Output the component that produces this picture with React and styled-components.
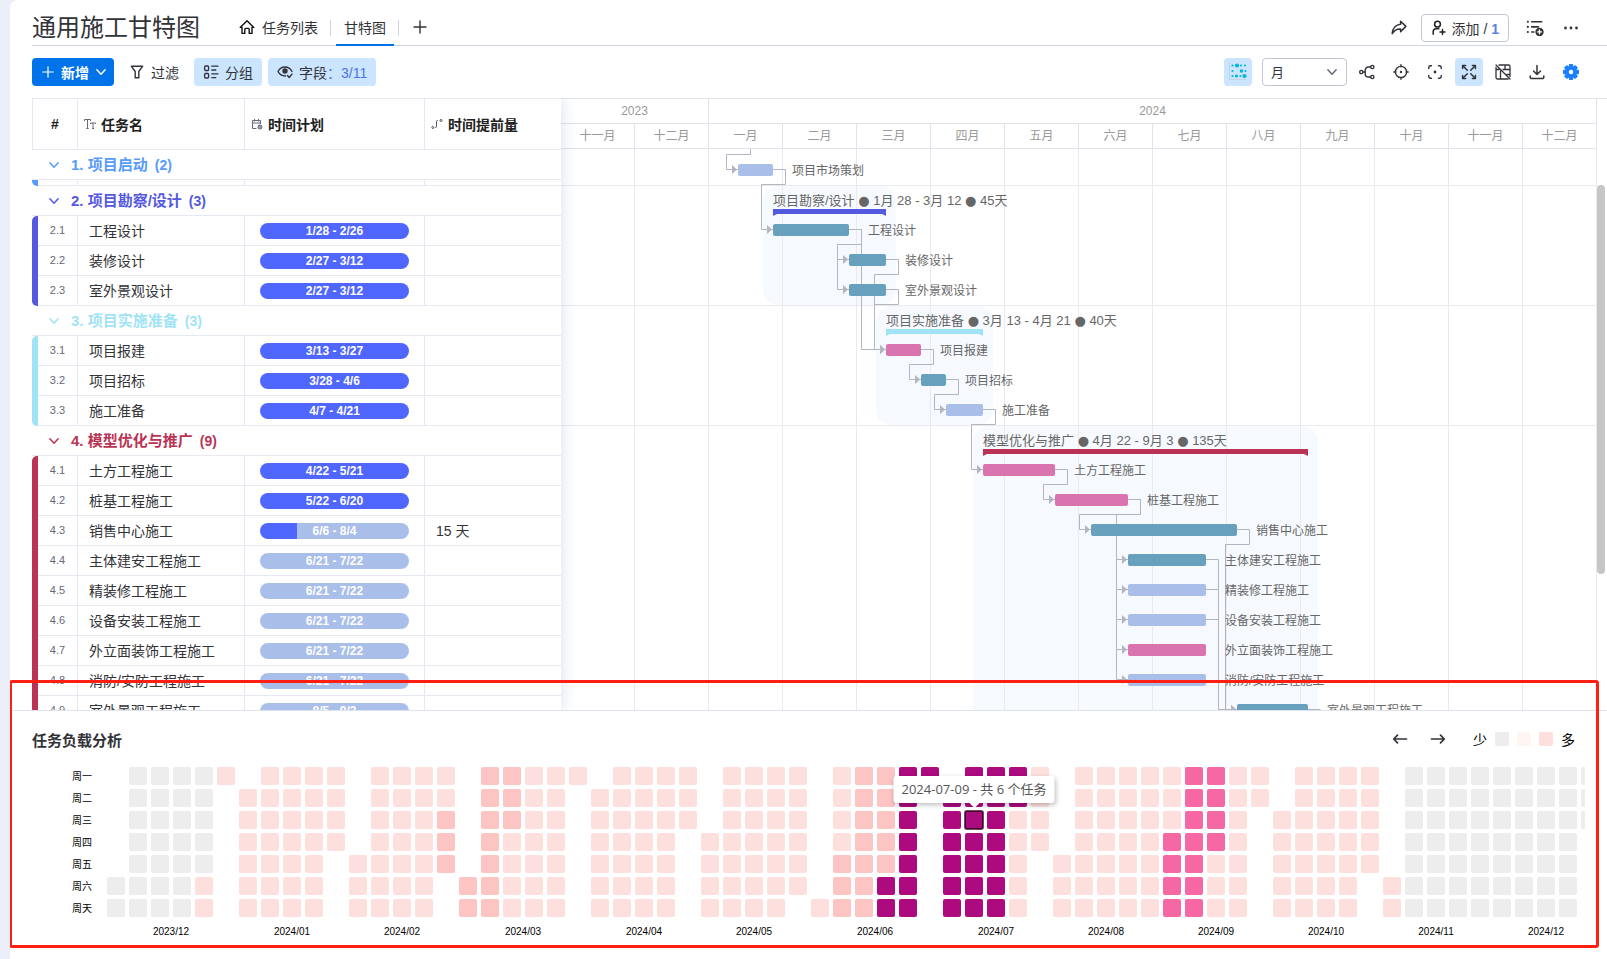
import React, { useState } from 'react';
import styled, { createGlobalStyle, css } from 'styled-components';

const GlobalStyle = createGlobalStyle`
  * {
    box-sizing: border-box;
  }
  body {
    margin: 0;
    background: #eceff8;
    color: #323338;
    font-family: "Liberation Sans", "Noto Sans CJK SC", sans-serif;
    font-size: 14px;
  }
  button, select {
    font: inherit;
    color: inherit;
  }
  button {
    background: none;
    border: 0;
    padding: 0;
    cursor: pointer;
  }
  h1, h2 {
    margin: 0;
  }
  svg {
    display: block;
  }
`;

/* ---------- data ---------- */

const MONTH_W = 74;
const ROW_H = 30;
const FIRST_ROW_Y = 7;

const months = ['十一月', '十二月', '一月', '二月', '三月', '四月', '五月', '六月', '七月', '八月', '九月', '十月', '十一月', '十二月'];

const TEAL = '#68a1bd';
const PINK = '#d974b0';
const BLUE = '#a9bee8';

const groups = [
  {
    no: 1, name: '项目启动', count: 2, color: '#579bfc', scrolled: true,
    tasks: [
      { id: '1.1', name: '项目立项', start: [1, 1], end: [1, 12], color: BLUE, next: ['1.2'] },
      { id: '1.2', name: '项目市场策划', start: [1, 13], end: [1, 27], color: BLUE, next: ['2.1'] },
    ],
  },
  {
    no: 2, name: '项目勘察/设计', count: 3, color: '#5559df', days: 45,
    tasks: [
      { id: '2.1', name: '工程设计', start: [1, 28], end: [2, 26], color: TEAL, done: 100, next: ['2.2', '2.3', '3.1'] },
      { id: '2.2', name: '装修设计', start: [2, 27], end: [3, 12], color: TEAL, done: 100, next: ['3.1'] },
      { id: '2.3', name: '室外景观设计', start: [2, 27], end: [3, 12], color: TEAL, done: 100, next: ['3.1'] },
    ],
  },
  {
    no: 3, name: '项目实施准备', count: 3, color: '#a1e3f6', days: 40,
    tasks: [
      { id: '3.1', name: '项目报建', start: [3, 13], end: [3, 27], color: PINK, done: 100, next: ['3.2'] },
      { id: '3.2', name: '项目招标', start: [3, 28], end: [4, 6], color: TEAL, done: 100, next: ['3.3'] },
      { id: '3.3', name: '施工准备', start: [4, 7], end: [4, 21], color: BLUE, done: 100, next: ['4.1'] },
    ],
  },
  {
    no: 4, name: '模型优化与推广', count: 9, color: '#bb3354', days: 135,
    tasks: [
      { id: '4.1', name: '土方工程施工', start: [4, 22], end: [5, 21], color: PINK, done: 100, next: ['4.2'] },
      { id: '4.2', name: '桩基工程施工', start: [5, 22], end: [6, 20], color: PINK, done: 100, next: ['4.3', '4.4', '4.5', '4.6', '4.7', '4.8'] },
      { id: '4.3', name: '销售中心施工', start: [6, 6], end: [8, 4], color: TEAL, done: 25, lead: '15 天', next: ['4.9'] },
      { id: '4.4', name: '主体建安工程施工', start: [6, 21], end: [7, 22], color: TEAL, done: 0, next: ['4.9'] },
      { id: '4.5', name: '精装修工程施工', start: [6, 21], end: [7, 22], color: BLUE, done: 0, next: ['4.9'] },
      { id: '4.6', name: '设备安装工程施工', start: [6, 21], end: [7, 22], color: BLUE, done: 0, next: ['4.9'] },
      { id: '4.7', name: '外立面装饰工程施工', start: [6, 21], end: [7, 22], color: PINK, done: 0, next: [] },
      { id: '4.8', name: '消防/安防工程施工', start: [6, 21], end: [7, 22], color: BLUE, done: 0, next: [] },
      { id: '4.9', name: '室外景观工程施工', start: [8, 5], end: [9, 3], color: TEAL, done: 0, next: ['5.1'] },
    ],
  },
];

const daysIn = (month, year = 2024) => new Date(year, month, 0).getDate();
const dateX = (month, day) => Math.round((month + 1) * MONTH_W + (MONTH_W * (day - 1)) / daysIn(month));

// every task gets its box on the chart, every group its frame
const bars = {};
const frames = [];
let y = FIRST_ROW_Y - ROW_H;
groups.forEach(group => {
  const top = y;
  if (!group.scrolled) y += ROW_H;
  group.tasks.forEach(task => {
    const x = dateX(...task.start);
    bars[task.id] = { ...task, x, y: y + 8, x2: dateX(task.end[0], task.end[1] + 1) };
    y += ROW_H;
  });
  const own = group.tasks.map(t => bars[t.id]);
  frames.push({ ...group, top, bottom: y, x: Math.min(...own.map(b => b.x)), x2: Math.max(...own.map(b => b.x2)) });
});

const linkPath = (from, to) => {
  const y1 = from.y + 5.5;
  const out = from.x2 + 12.5;
  if (!to) return `M${from.x2} ${y1}H${out}`;
  const y2 = to.y + 5.5;
  const into = to.x - 11.5;
  // a link with room enough goes straight down beside the target
  if (out < to.x) return `M${from.x2} ${y1}H${out}V${y2}H${to.x}`;
  return `M${from.x2} ${y1}H${out}V${y1 + 15}H${into}V${y2}H${to.x}`;
};

const links = [];
Object.values(bars).forEach(bar => {
  bar.next.forEach(id => links.push({ key: bar.id + id, from: bar, to: bars[id] }));
});

/* ---------- workload calendar ---------- */

const levelOf = date => {
  const n = (date.getFullYear() - 2023) * 10000 + (date.getMonth() + 1) * 100 + date.getDate();
  const between = (a, b) => n >= a && n <= b;
  if (between(10621, 10722)) return 6;
  if (between(10904, 10918)) return 4;
  if (between(10227, 10312) || between(10606, 10620)) return 2;
  if (between(1229, 11102)) return 1;
  return 0;
};

const levelColor = { 0: '#ededed', 1: '#fde0dd', 2: '#fcc5c3', 4: '#f568a3', 6: '#ad0a7f' };

const calendar = Array.from({ length: 13 }, (_, i) => {
  const year = i === 0 ? 2023 : 2024;
  const month = i === 0 ? 12 : i;
  return {
    label: `${year}/${String(month).padStart(2, '0')}`,
    offset: new Date(year, month - 1, 1).getDay(),
    days: Array.from({ length: daysIn(month, year) }, (_, d) => ({
      key: `${year}-${String(month).padStart(2, '0')}-${String(d + 1).padStart(2, '0')}`,
      level: levelOf(new Date(year, month - 1, d + 1)),
    })),
  };
});

const weekdays = ['周一', '周二', '周三', '周四', '周五', '周六', '周天'];

/* ---------- icons ---------- */

const Icon = ({ size = 16, children, ...rest }) => (
  <svg width={size} height={size} viewBox="0 0 16 16" fill="none" stroke="currentColor" strokeWidth="1.4" strokeLinecap="round" strokeLinejoin="round" aria-hidden="true" {...rest}>
    {children}
  </svg>
);

const HomeIcon = () => <Icon stroke="#111"><path d="M1.2 8.4 8 1.8l6.8 6.6H13v6h-2.8v-4a1 1 0 0 0-1-1H6.8a1 1 0 0 0-1 1v4H3v-6z" /></Icon>;
const PlusIcon = ({ size }) => <Icon size={size}><path d="M8 2v12M2 8h12" /></Icon>;
const Chevron = ({ size = 12 }) => <Icon size={size} strokeWidth="2"><path d="m2.5 5 5.5 6 5.5-6" /></Icon>;
const ShareIcon = () => <Icon strokeWidth="1.5"><path d="m9.6 1.2 5.300 5.200-5.300 5.200V8.900C6 8.700 3.200 10.400 1.200 13.600 1.600 8.200 4.800 4.500 9.600 4.200z" /></Icon>;
const PersonIcon = () => (
  <Icon stroke="#222" strokeWidth="1.500"><circle cx="6.500" cy="4.200" r="2.900" /><path d="M2.200 14.200v-2.500a3 3 0 0 1 3-3h2.600M11.500 9.500v5M9 12h5" /></Icon>
);
const ListPlusIcon = () => (
  <Icon size={18}>
    <path d="M5 2.500h9M5 7h6M5 11.500h2" /><path d="M1.600 2.500h.1M1.600 7h.1M1.600 11.500h.1" strokeWidth="1.800" />
    <circle cx="12" cy="11.500" r="3" fill="currentColor" /><path d="M12 9.800v3.400M10.300 11.500h3.400" stroke="#fff" strokeWidth="1.200" />
  </Icon>
);
const DotsIcon = () => <Icon fill="currentColor" stroke="none"><circle cx="2.500" cy="8" r="1.400" /><circle cx="8" cy="8" r="1.400" /><circle cx="13.500" cy="8" r="1.400" /></Icon>;
const FilterIcon = () => <Icon><path d="M2.300 2.200h11.400L9.800 7.500v6.200H6.200V7.500z" /></Icon>;
const GroupIcon = () => (
  <Icon strokeWidth="1.3"><rect x="1.600" y="2" width="4" height="4.500" rx="1" /><rect x="1.600" y="9.500" width="4" height="4.500" rx="1" /><path d="M8.800 2.200H15M8.800 6h4M8.800 9.800H15M8.800 13.600h4" /></Icon>
);
const EyeIcon = () => (
  <Icon><path d="M8.500 12C4.800 12 2.200 9.800 1 7.500 2.300 5 4.900 3 8 3s5.700 2 7 4.500" /><circle cx="8" cy="7" r="2" fill="currentColor" /><path d="m10.400 11.600 1.800 1.900 2.800-3.400" /></Icon>
);
const TimelineIcon = () => (
  <svg width="20" height="20" viewBox="0 0 20 20" fill="#00b8d9" aria-hidden="true">
    <path d="M1.500 1v16.500H18" fill="none" stroke="#c3d4e2" />
    {[[4.500, 3.500, 1.100], [9, 3.500, 2.100], [13, 3.500, 1.100], [17, 3.500, 1.100], [4.500, 9, 1.100], [13.500, 9, 1.800], [17.500, 9, 1.100], [4.500, 14, 1.100], [8.500, 14, 1.600], [12.500, 14, 1.100], [16.500, 14, 2.100]].map(([cx, cy, r]) => (
      <circle key={`${cx}-${cy}`} cx={cx} cy={cy} r={r} />
    ))}
  </svg>
);
const BranchIcon = () => (
  <Icon><circle cx="2.300" cy="8" r="1.600" /><circle cx="13.300" cy="3" r="1.600" /><circle cx="13.300" cy="13" r="1.600" /><path d="M4 8h2.200M11.500 3h-2A3.300 3.300 0 0 0 6.200 6.300v3.400A3.300 3.300 0 0 0 9.500 13h2" /></Icon>
);
const TargetIcon = () => (
  <Icon><circle cx="8" cy="8" r="5.600" /><path d="M8 .8v2M8 13.200v2M.8 8h2M13.200 8h2" /><circle cx="8" cy="8" r=".5" fill="currentColor" /></Icon>
);
const FocusIcon = () => (
  <Icon><path d="M1.800 4.500V3.300a1.500 1.500 0 0 1 1.500-1.500H4.500M11.500 1.800h1.200a1.500 1.500 0 0 1 1.500 1.500V4.500M14.200 11.500v1.200a1.500 1.500 0 0 1-1.500 1.500H11.500M4.500 14.200H3.300a1.500 1.500 0 0 1-1.500-1.500V11.500" /><circle cx="8" cy="8" r=".7" fill="currentColor" /></Icon>
);
const ExpandIcon = () => (
  <Icon strokeWidth="1.5"><path d="m2 2 4.300 4.300M14 2 9.700 6.300M2 14l4.300-4.300M14 14 9.700 9.700" /><path d="M1.600 4.600v-3h3M11.400 1.600h3v3M1.600 11.400v3h3M14.400 11.400v3h-3" /></Icon>
);
const TableOffIcon = () => (
  <Icon strokeWidth="1.3"><path d="M4 1h9.500a1.500 1.500 0 0 1 1.500 1.500v10M13 15H2.500A1.500 1.500 0 0 1 1 13.500V3.500M8 5.500h7M1 5.500h3M5.500 7v8M10 1v4.500M12 10.500h3M1 1l14 14" /></Icon>
);
const DownloadIcon = () => <Icon strokeWidth="1.5"><path d="M8 1.500v8.800M4.500 7 8 10.500 11.500 7M1.200 12v1.200a1.300 1.300 0 0 0 1.300 1.300h11a1.300 1.300 0 0 0 1.300-1.300V12" /></Icon>;
const GearIcon = () => (
  <Icon stroke="none" fill="#1a80ff">
    {[0, 45, 90, 135].map(a => <rect key={a} x="5.800" y="0" width="4.400" height="16" rx="1" transform={`rotate(${a} 8 8)`} />)}
    <circle cx="8" cy="8" r="6" /><circle cx="8" cy="8" r="2.200" fill="#fff" />
  </Icon>
);
const TextIcon = () => (
  <svg width="12" height="12" viewBox="0 0 12 12" fill="none" stroke="#676879" aria-hidden="true"><path d="M.5 3V1.500h6V3M3.500 1.500v9M2.300 10.500h2.400M6.500 6V5h5v1M9 5v5.500M8 10.500h2" /></svg>
);
const CalendarIcon = () => (
  <svg width="12" height="12" viewBox="0 0 12 12" fill="none" stroke="#676879" aria-hidden="true"><path d="M5.500 10.500h-4v-8h8V6M1.500 5h8M3.500 1v2.500M7.500 1v2.500" /><circle cx="9" cy="9" r="2" fill="#9a9ba7" /></svg>
);
const LeadIcon = () => (
  <svg width="12" height="12" viewBox="0 0 12 12" fill="none" stroke="#50515c" aria-hidden="true"><circle cx="1.800" cy="9.500" r="1" /><circle cx="10" cy="2.500" r="1" /><path d="M4 9.500h.5a1 1 0 0 0 1-1V3.500a1 1 0 0 1 1-1H7" /></svg>
);
const ArrowIcon = ({ back }) => <Icon strokeWidth="1.700"><path d={back ? 'M14.500 8H1.800M5.500 4.200 1.700 8l3.800 3.800' : 'M1.500 8h12.700M10.500 4.200 14.300 8l-3.800 3.800'} /></Icon>;

/* ---------- layout ---------- */

const Page = styled.main`
  height: 100vh;
  min-height: 640px;
  margin-left: 10px;
  background: #fff;
  border-top-left-radius: 8px;
  display: flex;
  flex-direction: column;
  overflow: hidden;
`;

const Header = styled.header`
  height: 46px;
  flex: none;
  margin-left: 22px;
  padding-right: 22px;
  border-bottom: 1px solid #d0d4e4;
  display: flex;
  justify-content: space-between;
`;

const Title = styled.h1`
  font-size: 24px;
  font-weight: 400;
  line-height: 36px;
  padding-top: 10px;
  margin-right: 31px;
`;

const Row = styled.div`
  display: flex;
  align-items: center;
  gap: ${p => p.$gap || 0}px;
`;

const Tabs = styled.nav`
  display: flex;
  align-items: flex-end;
  height: 46px;
`;

const Tab = styled.button`
  height: 36px;
  display: flex;
  align-items: center;
  gap: 7px;
  padding: 0 8px;
  border-bottom: 2px solid ${p => (p.$active ? '#0073ea' : 'transparent')};
`;

const TabDivider = styled.span`
  width: 1px;
  height: 16px;
  margin: 0 5px 10px 4px;
  background: #d0d4e4;
`;

const HeaderActions = styled.div`
  display: flex;
  align-items: center;
  gap: 8px;
  padding-top: 10px;
`;

const IconButton = styled.button`
  width: 28px;
  height: 28px;
  display: flex;
  align-items: center;
  justify-content: center;
  border-radius: 4px;
  background: ${p => (p.$active ? '#cce5ff' : 'none')};
`;

const Members = styled.button`
  height: 28px;
  display: flex;
  align-items: center;
  gap: 5px;
  padding: 0 9px;
  margin-right: 4px;
  border: 1px solid #c3c6d4;
  border-radius: 4px;
  b {
    color: #5d7de8;
  }
`;

const Toolbar = styled.div`
  height: 52px;
  flex: none;
  padding: 0 22px;
  display: flex;
  align-items: center;
  justify-content: space-between;
`;

const ToolButton = styled.button`
  height: 28px;
  display: flex;
  align-items: center;
  gap: 6px;
  padding: 0 9px;
  border-radius: 4px;
  white-space: nowrap;
  ${p => p.$active && css`
    background: #cce5ff;
  `}
  ${p => p.$primary && css`
    background: #0073ea;
    color: #fff;
    font-weight: 700;
    padding: 0 7px 0 9px;
  `}
  em {
    font-style: normal;
    color: #4f73e6;
  }
`;

const SelectBox = styled.label`
  position: relative;
  width: 85px;
  margin-left: 4px;
  select {
    appearance: none;
    width: 100%;
    height: 28px;
    display: block;
    padding: 0 8px;
    border: 1px solid #c3c6d4;
    border-radius: 4px;
    background: #fff;
    font-size: 13px;
  }
  svg {
    position: absolute;
    right: 9px;
    top: 8px;
    color: #676879;
    pointer-events: none;
  }
`;

const Work = styled.section`
  flex: 1;
  min-height: 0;
  margin-left: 22px;
  display: flex;
  overflow: hidden;
`;

const TablePane = styled.div`
  flex: none;
  width: 529px;
  position: relative;
  z-index: 1;
  background: #fff;
  box-shadow: 3px 0 12px rgba(70, 90, 180, 0.14);
`;

const TaskTable = styled.table`
  width: 100%;
  table-layout: fixed;
  border-collapse: separate;
  border-spacing: 0;
  th, td {
    padding: 0;
    text-align: left;
    white-space: nowrap;
  }
`;

const HeadCell = styled.th`
  height: 52px;
  border: solid #e6e9ef;
  border-width: 1px 0 1px ${p => (p.$first ? 1 : 0)}px;
  ${p => !p.$last && css`
    border-right-width: 1px;
  `}
  span {
    display: flex;
    align-items: center;
    justify-content: ${p => (p.$first ? 'center' : 'flex-start')};
    gap: 5px;
    padding-left: ${p => (p.$first ? 0 : 6)}px;
    color: #222;
  }
`;

const GroupCell = styled.td`
  height: 30px;
  border-bottom: 1px solid #e6e9ef;
  color: ${p => p.$color};
  button {
    display: flex;
    align-items: center;
    gap: 11px;
    height: 29px;
    padding-left: 16px;
    font-size: 15px;
    font-weight: 700;
    line-height: 24px;
  }
  small {
    font-size: 14px;
    margin-left: 7px;
  }
`;

const Cell = styled.td`
  height: ${p => (p.$short ? 6 : 30)}px;
  border-right: ${p => (p.$last ? 0 : 1)}px solid #e6e9ef;
  border-bottom: 1px solid #e6e9ef;
  font-size: 14px;
  line-height: ${p => (p.$short ? 5 : 24)}px;
  && {
    padding: 0 ${p => p.$pad || 11}px;
  }
`;

const NumberCell = styled.td`
  height: ${p => (p.$short ? 6 : 30)}px;
  div {
    display: flex;
    height: ${p => (p.$short ? 6 : 30)}px;
  }
  i {
    width: 6px;
    background: ${p => p.$color};
    border-radius: ${p => (p.$start ? 5 : 0)}px 0 0 ${p => (p.$end ? 5 : 0)}px;
  }
  span {
    flex: 1;
    border-right: 1px solid #e6e9ef;
    border-bottom: 1px solid #e6e9ef;
    font-size: 11px;
    line-height: 29px;
    text-align: center;
    color: #676879;
  }
`;

const Pill = styled.div`
  height: 16px;
  border-radius: 8px;
  background: linear-gradient(to right, #4f66ff ${p => p.$done}%, #a9bee8 ${p => p.$done}%);
  color: #fff;
  font-size: 12px;
  font-weight: 700;
  line-height: 16px;
  text-align: center;
`;

const GanttPane = styled.div`
  flex: 1;
  min-width: 0;
  border-top: 1px solid #dfe3ec;
  display: flex;
  overflow: hidden;
`;

const Timeline = styled.div`
  flex: none;
  width: ${MONTH_W * 14}px;
`;

const Years = styled.div`
  display: flex;
`;

const Scale = styled.div`
  width: ${p => p.$months * MONTH_W}px;
  height: 25px;
  border-right: 1px solid #dfe3ec;
  border-bottom: 1px solid #dfe3ec;
  font-size: 12px;
  line-height: 24px;
  text-align: center;
  color: #999;
`;

const ScrollTrack = styled.div`
  width: 8px;
  height: 389px;
  margin-top: 86px;
  border-radius: 4px;
  background: #c6c6c6;
`;

const ChartLabel = styled.text`
  font-size: ${p => (p.$big ? 13 : 12)}px;
  fill: #666;
`;

const Dot = styled.tspan`
  font-family: "DejaVu Sans", sans-serif;
`;

const LoadPanel = styled.section`
  flex: none;
  position: relative;
  height: 249px;
  padding: 14px 22px 0;
  border-top: 1px solid #dfe3ec;
  background: #fff;
`;

const LoadHeader = styled.div`
  display: flex;
  justify-content: space-between;
  align-items: center;
  height: 28px;
  margin-bottom: 14px;
  h2 {
    font-size: 15px;
    font-weight: 700;
  }
`;

const Legend = styled.div`
  display: flex;
  align-items: center;
  gap: 8px;
  padding: 0 10px 0 11px;
  color: #000;
`;

const Swatch = styled.i`
  width: 14px;
  height: 14px;
  border-radius: 2px;
  background: ${p => p.$color};
`;

const Heatmap = styled.div`
  display: flex;
  gap: 15px;
  color: #000;
  font-size: 10px;
`;

const Weekdays = styled.div`
  width: 60px;
  flex: none;
  display: grid;
  grid-auto-rows: 18px;
  row-gap: 4px;
  line-height: 20px;
  text-align: right;
`;

const Months = styled.div`
  flex: 1;
  min-width: 0;
  display: flex;
  gap: 4px;
  overflow: hidden;
`;

const Month = styled.div`
  flex: none;
  text-align: center;
  p {
    margin: 6px 0 0;
    line-height: 18px;
  }
`;

const Days = styled.div`
  display: grid;
  grid-template-rows: repeat(7, 18px);
  grid-auto-columns: 18px;
  grid-auto-flow: column;
  gap: 4px;
`;

const Day = styled.div`
  position: relative;
  grid-row-start: ${p => p.$row || 'auto'};
  border-radius: 2px;
  background: ${p => levelColor[p.$level]};
  ${p => p.$active && css`
    box-shadow: 0 0 0 1px #6b4a62, inset 0 0 0 1px #3a0a2e;
  `}
`;

const Tooltip = styled.div`
  position: absolute;
  z-index: 2;
  bottom: 26px;
  left: 50%;
  transform: translateX(-50%);
  height: 27px;
  padding: 0 8px;
  border-radius: 3px;
  background: #fff;
  box-shadow: 1px 2px 5px rgba(0, 0, 0, 0.25);
  color: #555;
  font-family: "Open Sans", "Noto Sans CJK SC", sans-serif;
  font-size: 13px;
  line-height: 27px;
  white-space: nowrap;
  &::after {
    content: "";
    position: absolute;
    top: 100%;
    left: 50%;
    margin-left: -5px;
    border: 5px solid transparent;
    border-top-color: #fff;
    border-bottom: 0;
  }
`;

const Highlight = styled.div`
  position: absolute;
  top: -31px;
  right: 8px;
  bottom: 11px;
  left: -1px;
  z-index: 3;
  border: 3px solid #ff1e12;
  border-radius: 3px;
  pointer-events: none;
`;

/* ---------- parts ---------- */

const TaskRow = ({ task, group, first, last }) => {
  const short = group.scrolled;
  return (
    <tr>
      <NumberCell $color={group.color} $start={first && !short} $end={last} $short={short}>
        <div><i /><span>{!short && task.id}</span></div>
      </NumberCell>
      <Cell $short={short}>{!short && task.name}</Cell>
      <Cell $short={short} $pad={15}>
        {!short && <Pill $done={task.done}>{task.start.join('/')} - {task.end.join('/')}</Pill>}
      </Cell>
      <Cell $short={short} $last>{task.lead}</Cell>
    </tr>
  );
};

const Chart = () => (
  <svg width={MONTH_W * 14} height="1000" aria-label="甘特图">
    <g fill="#f6faff">
      {frames.slice(1).map(f => (
        <rect key={f.no} x={f.x - 10} y={f.top} width={f.x2 - f.x + 20} height={f.bottom - f.top - 1} rx="16" />
      ))}
    </g>
    <g fill="#e8eaee">
      {months.map((m, i) => <rect key={i} x={(i + 1) * MONTH_W - 1} y="0" width="1" height="1000" />)}
      {frames.map(f => <rect key={f.no} x="0" y={f.bottom - 1} width={MONTH_W * 14} height="1" />)}
    </g>
    <g fill="none" stroke="#b3b6c1">
      {links.map(l => <path key={l.key} d={linkPath(l.from, l.to)} />)}
    </g>
    <g fill="#b3b6c1">
      {links.filter(l => l.to).map(l => (
        <path key={l.key} d={`M${l.to.x - 6} ${l.to.y + 1}l5 4.500-5 4.500z`} />
      ))}
    </g>
    {Object.values(bars).map(b => (
      <g key={b.id}>
        <rect x={b.x} y={b.y} width={b.x2 - b.x} height="12" rx="2" fill={b.color} />
        <ChartLabel x={b.x2 + 19} y={b.y + 11}>{b.name}</ChartLabel>
      </g>
    ))}
    {frames.slice(1).map(f => {
      const from = f.tasks[0].start;
      const to = f.tasks[f.tasks.length - 1].end;
      return (
        <g key={f.no}>
          <path fill={f.color} d={`M${f.x} ${f.top + 23}H${f.x2}v7l-4-2H${f.x + 4}l-4 2z`} />
          <ChartLabel $big x={f.x} y={f.top + 19}>
            {f.name} <Dot>●</Dot> {`${from[0]}月 ${from[1]} - ${to[0]}月 ${to[1]}`} <Dot>●</Dot> {f.days}天
          </ChartLabel>
        </g>
      );
    })}
  </svg>
);

const App = () => {
  const [scale, setScale] = useState('月');
  const [activeDay, setActiveDay] = useState('2024-07-09');

  return (
    <Page>
      <GlobalStyle />
      <Header>
        <Row>
          <Title>通用施工甘特图</Title>
          <Tabs>
            <Tab><HomeIcon />任务列表</Tab>
            <TabDivider />
            <Tab $active>甘特图</Tab>
            <TabDivider />
            <Tab aria-label="添加视图"><PlusIcon size={16} /></Tab>
          </Tabs>
        </Row>
        <HeaderActions>
          <IconButton aria-label="分享"><ShareIcon /></IconButton>
          <Members><PersonIcon /><span>添加 / <b>1</b></span></Members>
          <IconButton aria-label="日志"><ListPlusIcon /></IconButton>
          <IconButton aria-label="更多"><DotsIcon /></IconButton>
        </HeaderActions>
      </Header>

      <Toolbar>
        <Row $gap={6}>
          <ToolButton $primary><PlusIcon size={14} />新增<Chevron /></ToolButton>
          <ToolButton><FilterIcon />过滤</ToolButton>
          <ToolButton $active><GroupIcon />分组</ToolButton>
          <ToolButton $active><EyeIcon /><span>字段<em>：3/11</em></span></ToolButton>
        </Row>
        <Row $gap={6}>
          <IconButton $active aria-label="时间轴"><TimelineIcon /></IconButton>
          <SelectBox>
            <select aria-label="时间刻度" value={scale} onChange={e => setScale(e.target.value)}>
              <option>月</option>
              <option>周</option>
              <option>日</option>
            </select>
            <Chevron />
          </SelectBox>
          <IconButton aria-label="依赖"><BranchIcon /></IconButton>
          <IconButton aria-label="定位"><TargetIcon /></IconButton>
          <IconButton aria-label="聚焦"><FocusIcon /></IconButton>
          <IconButton $active aria-label="全屏"><ExpandIcon /></IconButton>
          <IconButton aria-label="隐藏表格"><TableOffIcon /></IconButton>
          <IconButton aria-label="下载"><DownloadIcon /></IconButton>
          <IconButton aria-label="设置"><GearIcon /></IconButton>
        </Row>
      </Toolbar>

      <Work>
        <TablePane>
          <TaskTable>
            <colgroup>
              <col style={{ width: 46 }} />
              <col style={{ width: 167 }} />
              <col style={{ width: 180 }} />
              <col />
            </colgroup>
            <thead>
              <tr>
                <HeadCell $first><span>#</span></HeadCell>
                <HeadCell><span><TextIcon />任务名</span></HeadCell>
                <HeadCell><span><CalendarIcon />时间计划</span></HeadCell>
                <HeadCell $last><span><LeadIcon />时间提前量</span></HeadCell>
              </tr>
            </thead>
            {groups.map(group => {
              const shown = group.scrolled ? group.tasks.slice(-1) : group.tasks;
              return (
                <tbody key={group.no}>
                  <tr>
                    <GroupCell colSpan={4} $color={group.color}>
                      <button><Chevron /><span>{group.no}. {group.name}<small>({group.count})</small></span></button>
                    </GroupCell>
                  </tr>
                  {shown.map((task, i) => (
                    <TaskRow key={task.id} task={task} group={group} first={i === 0} last={i === shown.length - 1} />
                  ))}
                </tbody>
              );
            })}
          </TaskTable>
        </TablePane>
        <GanttPane>
          <Timeline>
            <Years>
              <Scale $months={2}>2023</Scale>
              <Scale $months={12}>2024</Scale>
            </Years>
            <Years>
              {months.map((m, i) => <Scale key={i} $months={1}>{m}</Scale>)}
            </Years>
            <Chart />
          </Timeline>
          <ScrollTrack />
        </GanttPane>
      </Work>

      <LoadPanel>
        <LoadHeader>
          <h2>任务负载分析</h2>
          <Row $gap={10}>
            <IconButton aria-label="向前"><ArrowIcon back /></IconButton>
            <IconButton aria-label="向后"><ArrowIcon /></IconButton>
            <Legend>
              少
              <Swatch $color="#ededed" />
              <Swatch $color="#fff5f3" />
              <Swatch $color="#fde0dd" />
              多
            </Legend>
          </Row>
        </LoadHeader>
        <Heatmap>
          <Weekdays>
            {weekdays.map(day => <span key={day}>{day}</span>)}
          </Weekdays>
          <Months>
            {calendar.map(month => (
              <Month key={month.label}>
                <Days>
                  {month.days.map((day, i) => (
                    <Day
                      key={day.key}
                      $level={day.level}
                      $row={i === 0 ? month.offset + 1 : 0}
                      $active={day.key === activeDay}
                      onMouseEnter={() => setActiveDay(day.key)}
                    >
                      {day.key === activeDay && <Tooltip>{day.key} - 共 {day.level} 个任务</Tooltip>}
                    </Day>
                  ))}
                </Days>
                <p>{month.label}</p>
              </Month>
            ))}
          </Months>
        </Heatmap>
        <Highlight />
      </LoadPanel>
    </Page>
  );
};

export default App;
